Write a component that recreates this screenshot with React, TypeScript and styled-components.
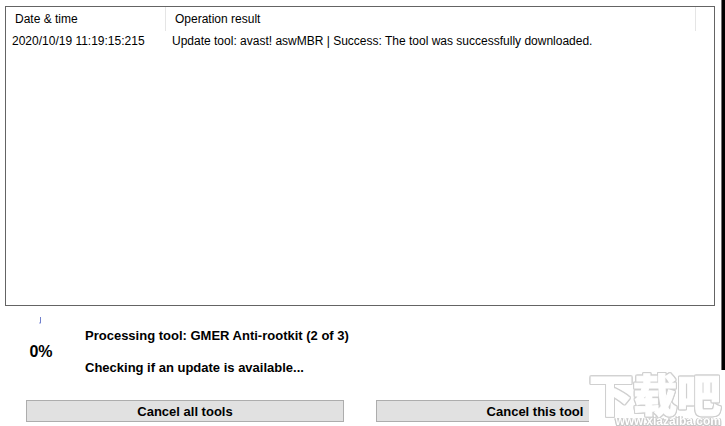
import React from "react";
import styled, { createGlobalStyle } from "styled-components";

const GlobalStyle = createGlobalStyle`
  * { box-sizing: border-box; }
  body {
    margin: 0;
    background: #fff;
    color: #000;
    font-family: "Liberation Sans", Arial, sans-serif;
    font-size: 12px;
  }
`;

const Desktop = styled.div`
  position: relative;
  min-height: 100vh;
  overflow: hidden;
`;

const DarkEdge = styled.div`
  position: absolute;
  top: 0;
  right: 0;
  width: 4px;
  height: 370px;
  background: #000;
  border-left: 1px solid #707070;
`;

const Page = styled.main`
  display: flex;
  flex-direction: column;
  min-height: 100vh;
  padding: 6px 10px 4px 5px;
`;

const LogPanel = styled.section`
  height: 300px;
  border: 1px solid #646464;
`;

const LogTable = styled.table`
  width: 100%;
  border-collapse: separate;
  border-spacing: 0;
  table-layout: fixed;
`;

const Column = styled.col<{ $width?: number }>`
  width: ${(p) => (p.$width ? `${p.$width}px` : "auto")};
`;

const HeadCell = styled.th`
  height: 24px;
  padding: 0 9px;
  border-right: 1px solid #e5e5e5;
  font-weight: 400;
  text-align: left;
  line-height: 16px;
  &:last-child { border-right: 0; }
`;

const Cell = styled.td`
  height: 20px;
  padding: 0 6px;
  line-height: 16px;
  white-space: nowrap;
`;

const Status = styled.section`
  display: flex;
  height: 94px;
  padding-top: 11px;
`;

const Progress = styled.div`
  display: flex;
  flex-direction: column;
  align-items: center;
  width: 72px;
`;

const Spinner = styled.svg`
  display: block;
  width: 8px;
  height: 8px;
`;

const Percent = styled.strong`
  margin-top: 17px;
  font-size: 16px;
  line-height: 20px;
`;

const Messages = styled.div`
  display: flex;
  flex-direction: column;
  gap: 16px;
  padding: 11px 0 0 8px;
  font-size: 13px;
  font-weight: 700;
  line-height: 16px;
`;

const Message = styled.p`
  margin: 0;
`;

const Actions = styled.div`
  display: grid;
  grid-template-columns: 1fr 1fr;
  gap: 32px;
  padding: 0 21px;
`;

const ActionButton = styled.button`
  height: 22px;
  padding: 2px 0 0;
  border: 1px solid #adadad;
  border-radius: 0;
  background: #e1e1e1;
  color: #000;
  font: 700 13px/16px "Liberation Sans", Arial, sans-serif;
`;

const Watermark = styled.div`
  position: absolute;
  right: 0;
  top: 370px;
  display: flex;
  flex-direction: column;
  align-items: flex-end;
  width: 136px;
  height: 56px;
  padding-right: 4px;
  background: #fff;
  color: #fff;
  white-space: nowrap;
`;

const WatermarkName = styled.span`
  font: 900 44px/46px "Noto Sans CJK SC", sans-serif;
  -webkit-text-stroke: 1px #fff;
  filter: drop-shadow(1px 0 0 #d0d0d0) drop-shadow(-1px 0 0 #d0d0d0)
    drop-shadow(0 1px 0 #d0d0d0) drop-shadow(0 -1px 0 #d0d0d0);
`;

const WatermarkSite = styled.span`
  font: 700 12px/10px "Liberation Sans", Arial, sans-serif;
  filter: drop-shadow(1px 0 0 #c8c8c8) drop-shadow(-1px 0 0 #c8c8c8)
    drop-shadow(0 1px 0 #c8c8c8);
`;

export default function App() {
  return (
    <Desktop>
      <GlobalStyle />
      <Page>
        <LogPanel aria-label="Operation log">
          <LogTable>
            <colgroup>
              <Column $width={160} />
              <Column />
              <Column $width={18} />
            </colgroup>
            <thead>
              <tr>
                <HeadCell>Date &amp; time</HeadCell>
                <HeadCell>Operation result</HeadCell>
                <HeadCell />
              </tr>
            </thead>
            <tbody>
              <tr>
                <Cell>2020/10/19 11:19:15:215</Cell>
                <Cell>Update tool: avast! aswMBR | Success: The tool was successfully downloaded.</Cell>
                <Cell />
              </tr>
            </tbody>
          </LogTable>
        </LogPanel>
        <Status>
          <Progress>
            <Spinner viewBox="0 0 8 8" shapeRendering="crispEdges" aria-hidden="true">
              <path d="M3 0H4V6H3Z" fill="#7080cc" />
              <path d="M2 5H3V7H2ZM3 6H4V7H3Z" fill="#c8cef0" />
            </Spinner>
            <Percent>0%</Percent>
          </Progress>
          <Messages>
            <Message>Processing tool: GMER Anti-rootkit (2 of 3)</Message>
            <Message>Checking if an update is available...</Message>
          </Messages>
        </Status>
        <Actions>
          <ActionButton type="button">Cancel all tools</ActionButton>
          <ActionButton type="button">Cancel this tool</ActionButton>
        </Actions>
      </Page>
      <DarkEdge />
      <Watermark>
        <WatermarkName lang="zh-CN">下载吧</WatermarkName>
        <WatermarkSite>www.xiazaiba.com</WatermarkSite>
      </Watermark>
    </Desktop>
  );
}
